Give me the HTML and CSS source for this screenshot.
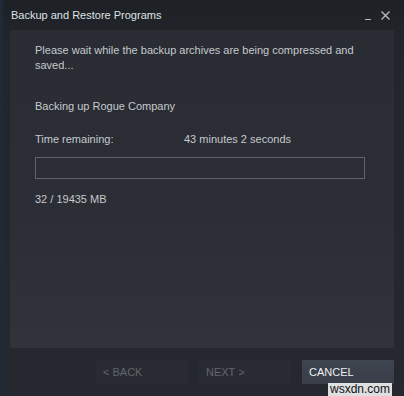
FILE: index.html
```html
<!DOCTYPE html>
<html lang="en">
<head>
    <meta charset="UTF-8">
    <title>Backup and Restore Programs</title>
    <link rel="stylesheet" href="styles.css">
</head>
<body>
    <div class="window">
        <div class="titlebar">
            <div class="title">Backup and Restore Programs</div>
            <div class="win-controls">
                <span class="win-min"></span>
                <svg class="win-close" width="9" height="9" viewBox="0 0 9 9">
                    <path d="M0.5 0.5 L8.5 8.5 M8.5 0.5 L0.5 8.5" stroke="#b8bcc2" stroke-width="1.3"/>
                </svg>
            </div>
        </div>
        <div class="panel">
            <p class="intro">Please wait while the backup archives are being compressed and saved...</p>
            <p class="status">Backing up Rogue Company</p>
            <div class="time-row">
                <span class="time-label">Time remaining:</span>
                <span class="time-value">43 minutes 2 seconds</span>
            </div>
            <div class="progress"></div>
            <p class="size">32 / 19435 MB</p>
        </div>
        <div class="footer">
            <button class="btn disabled">&lt; BACK</button>
            <button class="btn disabled">NEXT &gt;</button>
            <button class="btn primary">CANCEL</button>
        </div>
        <div class="watermark">wsxdn.com</div>
    </div>
</body>
</html>
```

FILE: styles.css
```css
* {
    margin: 0;
    padding: 0;
    box-sizing: border-box;
}

body {
    background: #23262c;
    width: 404px;
    height: 396px;
    overflow: hidden;
    font-family: "Liberation Sans", Arial, sans-serif;
}

.window {
    position: relative;
    height: 396px;
    display: flex;
    flex-direction: column;
    background: linear-gradient(to bottom, #1d2025 0px, #22252b 40px, #25282e 100%);
    box-shadow: inset 3px 0 0 #1f2a37;
}

.titlebar {
    height: 30px;
    padding: 0 14px 0 11px;
    display: flex;
    justify-content: space-between;
    align-items: center;
}

.title {
    color: #dfe1e4;
    font-size: 11px;
    padding-bottom: 1px;
}

.win-controls {
    display: flex;
    align-items: flex-end;
    gap: 10px;
    height: 10px;
}

.win-min {
    width: 6px;
    height: 1px;
    background: #b8bcc2;
}

.win-close {
    display: block;
}

.panel {
    margin: 0 10px;
    height: 318px;
    padding: 13px 25px 0;
    background: linear-gradient(to bottom, #292c32 0%, #2b2e35 60%, #30333a 100%);
    color: #c6c9ce;
    font-size: 11px;
}

.intro {
    line-height: 15px;
    width: 330px;
}

.status {
    margin-top: 27px;
}

.time-row {
    display: flex;
    margin-top: 21px;
}

.time-label {
    width: 149px;
}

.progress {
    margin-top: 12px;
    width: 330px;
    height: 22px;
    border: 1px solid #5d626b;
}

.size {
    margin-top: 14px;
}

.footer {
    display: flex;
    justify-content: flex-end;
    gap: 11px;
    padding: 12px 10px 0;
}

.btn {
    width: 92px;
    height: 24px;
    border: none;
    padding-left: 7px;
    text-align: left;
    font-family: "Liberation Sans", Arial, sans-serif;
    font-size: 11px;
}

.btn.disabled {
    background: #282b32;
    color: #62666d;
}

.btn.primary {
    background: linear-gradient(to bottom, #3f4550, #393e48);
    color: #eef0f2;
}

.watermark {
    position: absolute;
    right: 12px;
    bottom: 0;
    padding: 0 2px;
    background: rgba(255, 255, 255, 0.85);
    color: #111;
    font-family: "Liberation Sans", Arial, sans-serif;
    font-size: 12px;
    line-height: 13px;
}
```
